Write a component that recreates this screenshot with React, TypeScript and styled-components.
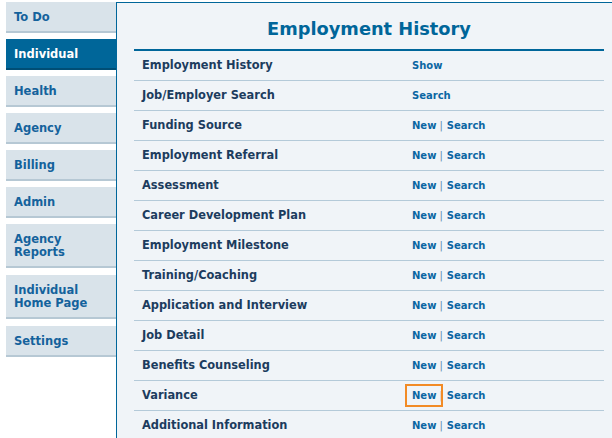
import React from "react";
import styled, { createGlobalStyle } from "styled-components";

const Global = createGlobalStyle`
  html, body { margin: 0; padding: 0; background: #ffffff; }
  body { font-family: "DejaVu Sans", Verdana, sans-serif; }
`;

const Page = styled.div`
  display: flex;
  align-items: flex-start;
  padding: 2px 0 0 6px;
  width: 612px;
  height: 438px;
  box-sizing: border-box;
  overflow: hidden;
`;

const Sidebar = styled.nav`
  display: flex;
  flex-direction: column;
  gap: 6px;
  width: 110px;
  flex: none;
`;

const Tab = styled.a<{ $active?: boolean; $tall?: boolean }>`
  display: flex;
  align-items: center;
  box-sizing: border-box;
  height: ${(p) => (p.$tall ? 44 : 31)}px;
  padding: 2px 8px 0 8px;
  margin-bottom: ${(p) => (p.$tall ? 1 : 0)}px;
  background: ${(p) => (p.$active ? "#006699" : "#d9e3ea")};
  border-bottom: 2px solid ${(p) => (p.$active ? "#004e75" : "#b6c8d4")};
  color: ${(p) => (p.$active ? "#ffffff" : "#14629c")};
  font-size: 11.5px;
  font-weight: bold;
  line-height: 13px;
  text-decoration: none;
`;

const Panel = styled.main`
  flex: 1;
  height: 440px;
  background: #f0f4f8;
  border-top: 1px solid #00669a;
  border-left: 1px solid #00669a;
  padding: 0 8px 0 17px;
  box-sizing: border-box;
`;

const Title = styled.h1`
  margin: 0;
  height: 48px;
  display: flex;
  align-items: center;
  justify-content: center;
  padding-top: 4px;
  box-sizing: border-box;
  font-size: 17.8px;
  font-weight: bold;
  color: #00669a;
  border-bottom: 2px solid #00669a;
`;

const Row = styled.div`
  display: grid;
  grid-template-columns: 270px 1fr;
  height: 30px;
  box-sizing: border-box;
  border-bottom: 1px solid #b4cad9;
  align-items: center;
  padding-bottom: 1px;
`;

const Name = styled.span`
  padding-left: 8px;
  font-size: 11.4px;
  font-weight: bold;
  color: #1c3c5e;
`;

const Actions = styled.span`
  display: flex;
  align-items: center;
  padding-left: 8px;
  font-size: 10px;
  font-weight: bold;
`;

const Link = styled.a`
  color: #0b66a3;
  text-decoration: none;
  position: relative;
`;

const FocusRing = styled.span`
  position: absolute;
  left: -7px;
  right: -7px;
  top: -6px;
  bottom: -6px;
  border: 2px solid #f28b26;
  pointer-events: none;
`;

const Sep = styled.span`
  color: #5f8aae;
  margin: 0 4px 0 3px;
  font-weight: normal;
`;

const tabs: { label: React.ReactNode; active?: boolean; tall?: boolean }[] = [
  { label: "To Do" },
  { label: "Individual", active: true },
  { label: "Health" },
  { label: "Agency" },
  { label: "Billing" },
  { label: "Admin" },
  { label: (<>Agency<br />Reports</>), tall: true },
  { label: (<>Individual<br />Home Page</>), tall: true },
  { label: "Settings" },
];

const rows: { name: string; show?: string; focused?: boolean }[] = [
  { name: "Employment History", show: "Show" },
  { name: "Job/Employer Search", show: "Search" },
  { name: "Funding Source" },
  { name: "Employment Referral" },
  { name: "Assessment" },
  { name: "Career Development Plan" },
  { name: "Employment Milestone" },
  { name: "Training/Coaching" },
  { name: "Application and Interview" },
  { name: "Job Detail" },
  { name: "Benefits Counseling" },
  { name: "Variance", focused: true },
  { name: "Additional Information" },
];

export default function App() {
  return (
    <>
      <Global />
      <Page>
        <Sidebar>
          {tabs.map((t, i) => (
            <Tab key={i} $active={t.active} $tall={t.tall}>
              <span>{t.label}</span>
            </Tab>
          ))}
        </Sidebar>
        <Panel>
          <Title>Employment History</Title>
          {rows.map((r) => (
            <Row key={r.name}>
              <Name>{r.name}</Name>
              <Actions>
                {r.show ? (
                  <Link>{r.show}</Link>
                ) : (
                  <>
                    <Link>
                      New
                      {r.focused && <FocusRing />}
                    </Link>
                    <Sep>|</Sep>
                    <Link>Search</Link>
                  </>
                )}
              </Actions>
            </Row>
          ))}
        </Panel>
      </Page>
    </>
  );
}
